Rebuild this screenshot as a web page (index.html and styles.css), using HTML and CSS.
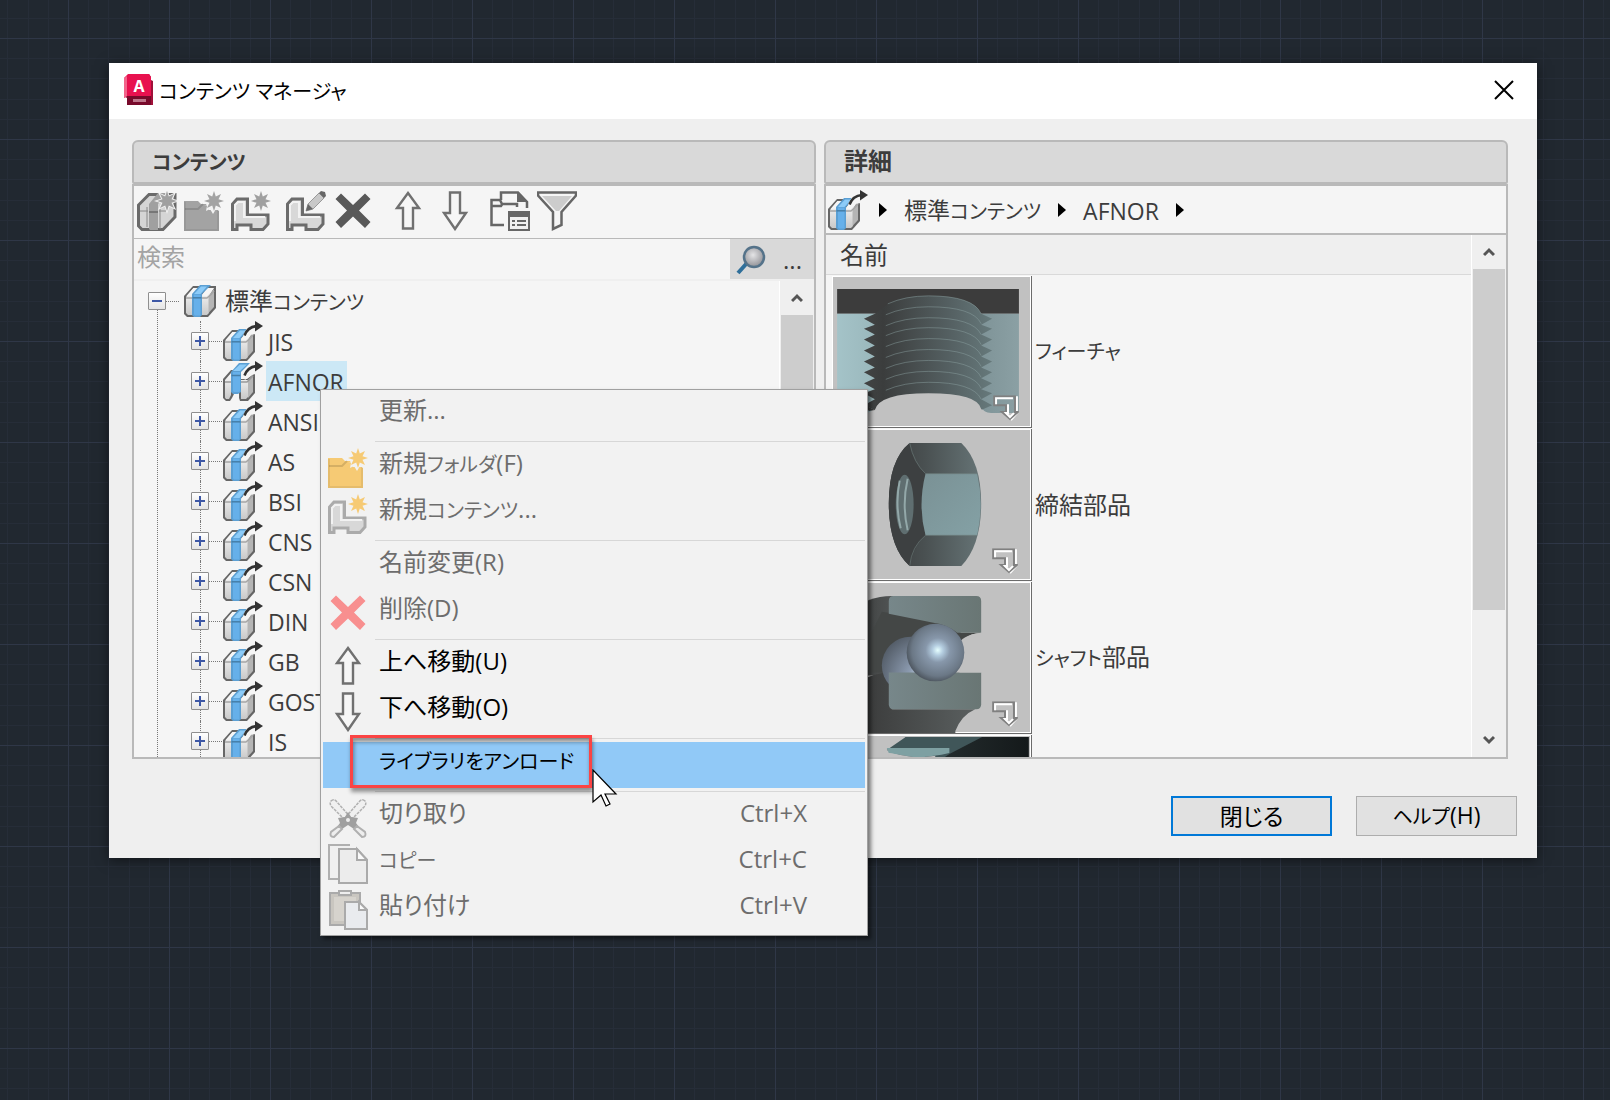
FILE: index.html
```html
<!DOCTYPE html>
<html lang="ja">
<head>
  <meta charset="utf-8">
  <title>コンテンツ マネージャ</title>
  <link rel="stylesheet" href="styles.css">
</head>
<body>
  <!-- shared icons -->
  <svg class="sprite" aria-hidden="true">
    <defs>
      <linearGradient id="gPage" x1="0" y1="0" x2="0" y2="1"><stop offset="0" stop-color="#fafafa"/><stop offset="1" stop-color="#c9c9c9"/></linearGradient>
      <linearGradient id="gSteel" x1="0" y1="0" x2="1" y2="0"><stop offset="0" stop-color="#424444"/><stop offset=".15" stop-color="#3b3d3d"/><stop offset=".7" stop-color="#566264"/><stop offset="1" stop-color="#66797b"/></linearGradient>
      <linearGradient id="gWall" x1="0" y1="0" x2="1" y2="0"><stop offset="0" stop-color="#a4c3c8"/><stop offset=".4" stop-color="#91adb1"/><stop offset=".8" stop-color="#7f9498"/><stop offset="1" stop-color="#8ba0a4"/></linearGradient>
      <linearGradient id="gFace" x1="0" y1="0" x2="1" y2="1"><stop offset="0" stop-color="#7a9195"/><stop offset="1" stop-color="#84a1a5"/></linearGradient>
      <linearGradient id="gNut" x1="0" y1="0" x2="1" y2="0"><stop offset="0" stop-color="#3c3e3f"/><stop offset=".4" stop-color="#4a5152"/><stop offset="1" stop-color="#667476"/></linearGradient>
      <linearGradient id="gRing" x1="0" y1="0" x2="1" y2="0"><stop offset="0" stop-color="#333"/><stop offset="1" stop-color="#5a5f5f"/></linearGradient>
      <linearGradient id="gBlock" x1="0" y1="0" x2="1" y2="0"><stop offset="0" stop-color="#77878a"/><stop offset="1" stop-color="#697674"/></linearGradient>
      <radialGradient id="gBall" cx=".54" cy=".46" r=".56"><stop offset="0" stop-color="#e6ffff"/><stop offset=".16" stop-color="#b4cde0"/><stop offset=".38" stop-color="#8797aa"/><stop offset=".8" stop-color="#6b7886"/><stop offset="1" stop-color="#4c545d"/></radialGradient>
      <radialGradient id="gBall2" cx=".7" cy=".7" r=".8"><stop offset="0" stop-color="#cfe2f3"/><stop offset=".3" stop-color="#8c9bb0"/><stop offset="1" stop-color="#525b66"/></radialGradient>
      <radialGradient id="gLens" cx=".45" cy=".4" r=".6"><stop offset="0" stop-color="#e4e4e6"/><stop offset="1" stop-color="#929297"/></radialGradient>
      <linearGradient id="gDark" x1="0" y1="0" x2="1" y2="0"><stop offset="0" stop-color="#2c3638"/><stop offset="1" stop-color="#14191a"/></linearGradient>
    </defs>

    <symbol id="star" viewBox="0 0 20 20">
      <path d="M10 0l1.800 5.500L17 3l-2.500 5.200L20 10l-5.500 1.800L17 17l-5.200-2.500L10 20l-1.800-5.500L3 17l2.500-5.200L0 10l5.500-1.800L3 3l5.200 2.500z"/>
    </symbol>
    <symbol id="books" viewBox="0 0 32 32">
      <path d="M0 11L9 1h23v22l-8 9H3l-3-3z" fill="#666"/>
      <path d="M2 12L9.500 3H15L8 11v19H4l-2-2z" fill="url(#gPage)"/>
      <path d="M23 3h7L25 11v17l-2 2h-6V11z" fill="url(#gPage)"/>
      <path d="M30 4V22L24.500 28V11.500z" fill="#b5b5b5"/>
      <path d="M2 13h6M18 13h5q4-3 7-7" stroke="#a5a5a5" stroke-width="1.500" fill="none"/>
      <path d="M2.500 11L9.500 3h5L8 10.500zM18 10.500L24 3h5.500L23 11z" fill="#f6f6f6"/>
      <path d="M8 9L16 0h11l-9 9v21l-2 2h-6l-2-2z" fill="#5b9fd3"/>
      <path d="M10 9.500h6.500v21h-5.500l-1-1z" fill="#66b0ea"/>
      <path d="M10 9L17 1.500h6L16.500 9z" fill="#8ccbf8"/>
      <path d="M8.500 12.800h9" stroke="#467fa8" stroke-width="1.500"/>
    </symbol>
    <symbol id="arc" viewBox="0 0 20 16">
      <path d="M1.500 14.500C3.500 9 8 5.500 14 5" stroke="#333" stroke-width="2.600" fill="none"/>
      <path d="M12 0l8 5-8 5.500z" fill="#333"/>
    </symbol>
    <symbol id="lib" viewBox="0 0 40 40">
      <use href="#books" x="0" y="8" width="32" height="32"/>
      <path d="M20 14l4-7h9v6l-6 1-4 4z" fill="#f5f5f5"/>
      <use href="#arc" x="20" y="0" width="20" height="16"/>
    </symbol>
    <symbol id="lib-open" viewBox="0 0 40 40">
      <path d="M0 18l8-9h3v24l-2 4-2 3H3l-3-3zM16 18h8l8-6v20l-7 8h-8l-1-3z" fill="#666"/>
      <path d="M2 19L8 12v22l-2 4H3l-1-1.500zM18 19h7v17l-2 2h-5z" fill="url(#gPage)"/>
      <path d="M25 19l5-5v17l-5 6z" fill="#b5b5b5"/>
      <path d="M2 21h6M18 21h6l6-6" stroke="#999" stroke-width="1.500" fill="none"/>
      <path d="M8 11L16 2h11l-9 9v20l-3 2h-5l-2-2z" fill="#5b9fd3"/>
      <path d="M10 11h7v19l-1 1h-5l-1-1z" fill="#66b0ea"/>
      <path d="M10 10l7-6.500h7L17 10z" fill="#8ccbf8"/>
      <path d="M8.500 14.500h9" stroke="#467fa8" stroke-width="1.500"/>
      <path d="M20 15l4-7h9v5l-6 1-5 5z" fill="#f5f5f5"/>
      <use href="#arc" x="20" y="0" width="20" height="16"/>
    </symbol>
    <symbol id="folder" viewBox="0 0 40 40">
      <path d="M0 10h14l3 3h5l3 6h10v21H0z"/>
      <path d="M1 18h13l5-5" stroke="#0002" fill="none" stroke-width="2"/>
      <path d="M1 11v28h33V19" stroke="#0001" fill="none" stroke-width="2"/>
      <path d="M20 14l3 1-1 5 4-2 3 5 3-5 3 2v-3z" fill="#f2f2f2"/>
      <use href="#star" x="20" y="0" width="20" height="20"/>
    </symbol>
    <symbol id="part" viewBox="0 0 40 40">
      <path d="M1.500 38.500V13l4.500-5h10.500v16H37v9l-5 5.500H20V34H6v4.500z" fill="#d8d8d8" stroke="currentColor" stroke-width="3"/>
      <path d="M4 30V14l3-3h6v15h21" fill="none" stroke="#f2f2f2" stroke-width="2"/>
    </symbol>
    <symbol id="up" viewBox="0 0 40 40">
      <path d="M20 2L31 17h-6v20.500H15V17H9z" fill="#f6f6f6" stroke="#707070" stroke-width="2.400"/>
    </symbol>
    <symbol id="down" viewBox="0 0 40 40">
      <path d="M20 38L31 22h-6V1.500H15V22H9z" fill="#f6f6f6" stroke="#707070" stroke-width="2.400"/>
    </symbol>
    <symbol id="cross" viewBox="0 0 40 40">
      <path d="M8 2.500L20 14 32 2.500 37.500 8 26 19.500 37.500 31 32 37 20 25.500 8 37 2.500 31 14 19.500 2.500 8z"/>
    </symbol>
    <symbol id="turn" viewBox="0 0 26 26">
      <path d="M24 1v16h1l-7 8" fill="none" stroke="#fff" stroke-width="2"/>
      <path d="M1 1h21v16h3l-8 7-8-7h4v-7H1z" fill="none" stroke="#808080" stroke-width="2"/>
      <path d="M3 9V3h17M15 9v9l-2 0 4 4 4-4" fill="none" stroke="#fff" stroke-width="2"/>
    </symbol>
  </svg>

  <main class="dialog">
    <header class="title-bar">
      <svg class="app-icon" viewBox="0 0 32 32" aria-hidden="true">
        <path d="M4 2l4-2h18l2 3v3l2 1v24H4V24l-2-1V4z" fill="#a01039"/>
        <path d="M1 4l4-4h21l2 3v19H4l-3 2z" fill="#e8114f"/>
        <path d="M1 4l3-2v20l-3 2z" fill="#f2648b"/>
        <path d="M4 22h24v9H4z" fill="#780a2b"/>
        <text x="16" y="18" text-anchor="middle" class="app-letter">A</text>
        <path d="M10 25h13v3H10z" fill="#d8a3b3" opacity=".7"/>
      </svg>
      <h1>コンテンツ マネージャ</h1>
      <button class="close" aria-label="閉じる"><svg width="20" height="20" viewBox="0 0 20 20"><path d="M1 1l18 18M19 1L1 19" stroke="#000" stroke-width="2"/></svg></button>
    </header>

    <div class="panels">
      <section class="panel">
        <h2><span class="kana">コンテンツ</span></h2>
        <div class="panel-body">
          <div class="toolbar">
            <button aria-label="新規ライブラリ"><svg class="icon" viewBox="0 0 40 40">
              <path d="M1.500 35V14L12 3.500h26V26L26 38.500H5z" fill="#d5d5d5" stroke="#6a6a6a" stroke-width="3"/>
              <path d="M12 13L21 2h9L21 13v26h-8l-1-1z" fill="#a0a0a0"/>
              <path d="M10 16v20M23 16v22M3 20h8M22 20h7" stroke="#888" fill="none"/>
              <path d="M12 21h9" stroke="#777" stroke-width="2"/>
              <use href="#star" x="17" y="-3" width="26" height="26" fill="#f2f2f2"/>
              <use href="#star" x="20" y="0" width="20" height="20" fill="#a0a0a0"/></svg></button>
            <button aria-label="新規フォルダ"><svg class="icon" fill="#a3a3a3"><use href="#folder"/></svg></button>
            <button aria-label="新規コンテンツ"><svg class="icon part"><use href="#part"/><use href="#star" x="20" width="20" height="20" fill="#a0a0a0"/></svg></button>
            <button class="group" aria-label="編集"><svg class="icon part"><use href="#part"/>
              <path d="M18 19l3-9L31 1l7 7-10 9z" fill="#f5f5f5"/>
              <path d="M20 20l2-7L33 2l5 5-11 11z" fill="#c8c8c8" stroke="#999"/>
              <path d="M20 20l2-7 5 5zM33 2l2-2 4 1 1 4-2 2z" fill="#666"/></svg></button>
            <button aria-label="削除"><svg class="icon" fill="#595959"><use href="#cross"/></svg></button>
            <button class="group" aria-label="上へ移動"><svg class="icon"><use href="#up"/></svg></button>
            <button aria-label="下へ移動"><svg class="icon"><use href="#down"/></svg></button>
            <button class="group" aria-label="プロパティ"><svg class="icon" viewBox="0 0 40 40">
              <path d="M14 34H1.500V9H10l2 4h15v3M2 15h9l2-3M11 9V1.500h17L37 11v6" fill="none" stroke="#666" stroke-width="2.500"/>
              <path d="M27 1l11 10H27z" fill="#666"/>
              <path d="M18 20h22v20H18z" fill="#666"/><path d="M20 26h18v12H20z" fill="#f0f0f0"/>
              <path d="M22 30h3m2 0h9M22 34h3m2 0h9" stroke="#666" stroke-width="2"/></svg></button>
            <button aria-label="フィルタ"><svg class="icon" viewBox="0 0 40 40">
              <path d="M1 1.500h38v3L24.500 21v13L16 38V21L1 4.500z" fill="#f5f5f5" stroke="#666" stroke-width="2.500"/>
              <path d="M5 5h30L22 20h-3z" fill="#ccc"/></svg></button>
          </div>
          <div class="search">
            <input type="text" placeholder="検索" aria-label="検索">
            <button class="find" aria-label="検索"><svg width="30" height="30" viewBox="0 0 30 30">
              <path d="M2 28l9-10" stroke="#2f6f9a" stroke-width="4"/>
              <circle cx="18" cy="12" r="10" fill="url(#gLens)" stroke="#55738a" stroke-width="2.500"/></svg></button>
            <button class="more" aria-label="オプション">...</button>
          </div>
          <div class="tree-view">
            <ul class="tree">
              <li class="root"><button class="toggle open" aria-label="閉じる"></button><svg class="root-icon"><use href="#books"/></svg><span class="label">標準<span class="kana">コンテンツ</span></span></li>
              <li><button class="toggle" aria-label="開く"></button><svg class="icon"><use href="#lib"/></svg><span class="label">JIS</span></li>
              <li><button class="toggle" aria-label="開く"></button><svg class="icon"><use href="#lib-open"/></svg><span class="label selected">AFNOR</span></li>
              <li><button class="toggle" aria-label="開く"></button><svg class="icon"><use href="#lib"/></svg><span class="label">ANSI</span></li>
              <li><button class="toggle" aria-label="開く"></button><svg class="icon"><use href="#lib"/></svg><span class="label">AS</span></li>
              <li><button class="toggle" aria-label="開く"></button><svg class="icon"><use href="#lib"/></svg><span class="label">BSI</span></li>
              <li><button class="toggle" aria-label="開く"></button><svg class="icon"><use href="#lib"/></svg><span class="label">CNS</span></li>
              <li><button class="toggle" aria-label="開く"></button><svg class="icon"><use href="#lib"/></svg><span class="label">CSN</span></li>
              <li><button class="toggle" aria-label="開く"></button><svg class="icon"><use href="#lib"/></svg><span class="label">DIN</span></li>
              <li><button class="toggle" aria-label="開く"></button><svg class="icon"><use href="#lib"/></svg><span class="label">GB</span></li>
              <li><button class="toggle" aria-label="開く"></button><svg class="icon"><use href="#lib"/></svg><span class="label">GOST</span></li>
              <li><button class="toggle" aria-label="開く"></button><svg class="icon"><use href="#lib"/></svg><span class="label">IS</span></li>
            </ul>
            <div class="scrollbar">
              <svg class="chevron" viewBox="0 0 12 10"><path d="M1 8l5-5 5 5" fill="none" stroke="#555" stroke-width="3"/></svg>
              <div class="thumb"></div>
              <svg class="chevron" viewBox="0 0 12 10"><path d="M1 2l5 5 5-5" fill="none" stroke="#555" stroke-width="3"/></svg>
            </div>
          </div>
        </div>
      </section>

      <section class="panel">
        <h2>詳細</h2>
        <div class="panel-body">
          <nav class="crumbs">
            <svg class="icon"><use href="#lib"/></svg>
            <i class="caret"></i><a href="#">標準<span class="kana">コンテンツ</span></a>
            <i class="caret"></i><a href="#">AFNOR</a>
            <i class="caret"></i>
          </nav>
          <div class="details">
            <table>
              <thead><tr><th>名前</th></tr></thead>
              <tbody>
                <tr><td><div class="item">
                  <svg class="preview" viewBox="0 0 200 152">
                    <path d="M5 13h183v25H5z" fill="#3c3c3c"/>
                    <path d="M5 38h183v100h-28q-8-1-10-6H43q-3 5-10 6H5z" fill="url(#gWall)"/>
                    <path d="M43 38l-11 5 11 6-11 4 11 6-11 5 11 6-11 5 11 6-11 5 11 6-11 5 11 6-11 5 11 6-11 4 11 6-11 6 11 5h107l11-5-11-6 11-6-11-4 11-6-11-5 11-6-11-5 11-6-11-5 11-6-11-5 11-6-11-5 11-6-11-4 11-6-11-5Q142 20 97 20 66 20 54 30z" fill="url(#gSteel)"/>
                    <g fill="none" stroke="#8fa5a5" stroke-opacity=".45">
                      <path d="M56 28q18-8 41-8 45 0 53 18"/>
                      <path d="M54 39q18-8 43-8 45 0 53 17"/><path d="M54 50q18-8 43-8 45 0 53 17"/>
                      <path d="M54 60q18-8 43-8 45 0 53 17"/><path d="M54 71q18-8 43-8 45 0 53 17"/>
                      <path d="M54 82q18-8 43-8 45 0 53 17"/><path d="M54 93q18-8 43-8 45 0 53 17"/>
                      <path d="M54 104q18-8 43-8 45 0 53 17"/><path d="M54 115q18-8 43-8 45 0 53 17"/>
                    </g>
                    <path d="M43 135q4-17 54-17 50 0 53 16 3 4 9 5H33q7 0 10-4z" fill="#c1c1c1"/>
                    <path d="M33 130l10 5-6 1z" fill="#3c3c3c"/>
                    <use href="#turn" x="162" y="120" width="26" height="26"/>
                  </svg><span class="kana">フィーチャ</span></div></td></tr>
                <tr><td><div class="item">
                  <svg class="preview" viewBox="0 0 200 152">
                    <path d="M78 14h52q20 19 20 61t-20 63H78Q57 119 57 75T78 14z" fill="url(#gNut)"/>
                    <path d="M78 14q4 20 16 31-8 30 0 62-12 10-16 31Q57 119 57 75T78 14z" fill="#3d4041"/>
                    <path d="M94 45h52q7 30 0 62H94q-8-30 0-62z" fill="url(#gFace)"/>
                    <path d="M78 14q4 20 16 31h52M94 107h52M78 138q2-20 16-31" fill="none" stroke="#70807f" stroke-opacity=".6"/>
                    <ellipse cx="73" cy="76" rx="9" ry="30" fill="#5f6e70"/>
                    <path d="M68 52q-5 24 1 48M76 50q-6 26 0 52" fill="none" stroke="#93a8a9" stroke-width="2"/>
                    <use href="#turn" x="161" y="120" width="26" height="26"/>
                  </svg><span>締結部品</span></div></td></tr>
                <tr><td><div class="item">
                  <svg class="preview" viewBox="0 0 200 152">
                    <path d="M3 75Q10 14 60 14h20v80H3z" fill="url(#gRing)"/>
                    <path d="M50 30l60 10 20 11h20q-20 2-24 14l-60 26H20z" fill="#444746"/>
                    <path d="M3 152V135q15-44 57-44v37h84q-14 6-20 22v2z" fill="url(#gRing)"/>
                    <circle cx="79" cy="84" r="29" fill="url(#gBall2)"/>
                    <path d="M57 32V19q0-5 5-5h83q5 0 5 5v32h-24q-10-8-24-10z" fill="url(#gBlock)"/>
                    <path d="M57 91h93v32q0 5-5 5H62q-5 0-5-5z" fill="url(#gBlock)"/>
                    <path d="M128 91q5-8 5-18l-5-12 6-4q4-5 16-6v40z" fill="#c1c1c1"/>
                    <circle cx="104" cy="71" r="29" fill="url(#gBall)"/>
                    <use href="#turn" x="161" y="120" width="26" height="26"/>
                  </svg><span><span class="kana">シャフト</span>部品</span></div></td></tr>
                <tr><td><div class="item">
                  <svg class="preview" viewBox="0 0 200 152">
                    <path d="M74 2h124v150H60z" fill="url(#gDark)"/>
                    <path d="M74 2h77l-33 17-20 14-43-18z" fill="#405659"/>
                    <path d="M55 13h63v5l-8 2-24 3-29-5z" fill="#7ea0a2"/>
                    <path d="M57 18l29 5 18-2-14 40H57z" fill="#c1c1c1"/>
                  </svg></div></td></tr>
              </tbody>
            </table>
            <div class="scrollbar">
              <svg class="chevron" viewBox="0 0 12 10"><path d="M1 8l5-5 5 5" fill="none" stroke="#555" stroke-width="3"/></svg>
              <div class="thumb short"></div>
              <svg class="chevron" viewBox="0 0 12 10"><path d="M1 2l5 5 5-5" fill="none" stroke="#555" stroke-width="3"/></svg>
            </div>
          </div>
        </div>
      </section>
    </div>

    <footer class="actions">
      <button class="default">閉じる</button>
      <button><span class="kana">ヘルプ</span>(H)</button>
    </footer>

    <!-- right click menu on the selected library -->
    <div class="menu">
      <button disabled><span class="text">更新...</span></button>
      <hr>
      <button disabled><svg class="icon" fill="#f6ca74"><use href="#folder"/></svg><span class="text">新規<span class="kana">フォルダ</span>(F)</span></button>
      <button disabled><svg class="icon part-dim"><use href="#part"/><use href="#star" x="20" width="20" height="20" fill="#f6ca74"/></svg><span class="text">新規<span class="kana">コンテンツ</span>...</span></button>
      <hr>
      <button disabled><span class="text">名前変更(R)</span></button>
      <button disabled><svg class="icon" fill="#f88f8f"><use href="#cross"/></svg><span class="text">削除(D)</span></button>
      <hr>
      <button><svg class="icon"><use href="#up"/></svg><span class="text">上へ移動(U)</span></button>
      <button><svg class="icon"><use href="#down"/></svg><span class="text">下へ移動(O)</span></button>
      <hr>
      <button class="active"><span class="text"><span class="kana">ライブラリをアンロード</span></span></button>
      <hr>
      <button disabled><svg class="icon" viewBox="0 0 40 40">
        <path d="M3 3q3-3 6 1l15 17-4 4L4 9Q1 6 3 3zM37 3q-3-3-6 1L16 21l4 4L36 9q3-3 1-6z" fill="#f0f0f0" stroke="#b0b0b0" stroke-width="1.500" stroke-dasharray="3 1"/>
        <path d="M20 14l3 5 7 1-2 5 3 4-5 2-6-4-6 4-5-2 3-4-2-5 7-1z" fill="#a0a0a0"/>
        <path d="M11 28l-8 6q-2 5 3 5l8-8zM29 28l8 6q2 5-3 5l-8-8z" fill="#eee" stroke="#b0b0b0" stroke-width="2"/>
        <circle cx="20" cy="22" r="2" fill="#eee"/></svg><span class="text">切り取り</span><kbd>Ctrl+X</kbd></button>
      <button disabled><svg class="icon" viewBox="0 0 40 40">
        <path d="M22 1H1v34h10" fill="#f0f0f0" stroke="#b0b0b0" stroke-width="2"/>
        <path d="M11 5h18l10 11v23H11z" fill="#ececec" stroke="#aaa" stroke-width="2"/>
        <path d="M29 5v11h10z" fill="#fafafa" stroke="#aaa" stroke-width="2"/></svg><span class="text"><span class="kana">コピー</span></span><kbd>Ctrl+C</kbd></button>
      <button disabled><svg class="icon" viewBox="0 0 40 40">
        <path d="M2 3h30v32H2z" fill="#c9c6c0" stroke="#aaa" stroke-width="2"/>
        <path d="M6 7h22v24H6z" fill="#d6d3cd"/>
        <path d="M11 1h12v4H11z" fill="#eee" stroke="#aaa" stroke-width="2"/>
        <path d="M17 12h14l8 8v19H17z" fill="#e9ebee" stroke="#aaa" stroke-width="2"/>
        <path d="M31 12v8h8z" fill="#fafafa" stroke="#aaa" stroke-width="2"/></svg><span class="text">貼り付け</span><kbd>Ctrl+V</kbd></button>
      <div class="callout"></div>
      <svg class="cursor" width="26" height="40" viewBox="0 0 26 40"><path d="M1 1v32l8-7 5 11 4-2-5-10h11z" fill="#fff" stroke="#000" stroke-width="1.200"/></svg>
    </div>
  </main>
</body>
</html>
```
FILE: styles.css
```css
* {
  box-sizing: border-box;
}
body {
  margin: 0;
  min-height: 100vh;
  padding: 63px 73px 63px 109px;
  background-color: #212830;
  background-image:
    linear-gradient(90deg, #2f3747 1px, transparent 1px),
    linear-gradient(#2f3747 1px, transparent 1px),
    linear-gradient(90deg, transparent 20px, #262d38 20px, #262d38 21px, transparent 21px, transparent 40px, #262d38 40px, #262d38 41px, transparent 41px, transparent 61px, #262d38 61px, #262d38 62px, transparent 62px, transparent 81px, #262d38 81px, #262d38 82px, transparent 82px),
    linear-gradient(transparent 20px, #262d38 20px, #262d38 21px, transparent 21px, transparent 40px, #262d38 40px, #262d38 41px, transparent 41px, transparent 61px, #262d38 61px, #262d38 62px, transparent 62px, transparent 81px, #262d38 81px, #262d38 82px, transparent 82px);
  background-size: 101px 101px;
  background-position: 68px 38px;
  color: #3c3c3c;
  font-family: "Open Sans", "Noto Sans CJK JP", sans-serif;
  font-size: 24px;
  font-feature-settings: "palt";
}
button, input {
  font: inherit;
  font-feature-settings: inherit;
  color: inherit;
  margin: 0;
  padding: 0;
  border: 0;
  background: none;
}
.sprite {
  position: absolute;
  width: 0;
  height: 0;
}
.kana {
  font-size: 20px;
}
.icon {
  display: block;
  flex: none;
  width: 40px;
  height: 40px;
}
.part {
  color: #6b6b6b;
}
.part-dim {
  color: #ababab;
}

/* window */
.dialog {
  position: relative;
  background: #efefef;
  box-shadow: 0 2px 12px rgba(0,0,0,0.5);
}
.title-bar {
  display: flex;
  align-items: center;
  height: 56px;
  padding: 0 23px 2px 14px;
  background: #fff;
}
.app-icon {
  width: 32px;
  height: 32px;
  margin-right: 4px;
}
.app-letter {
  fill: #fff;
  font: bold 16px "Open Sans", sans-serif;
}
h1 {
  flex: 1;
  margin: 0;
  color: #000;
  font-size: 20px;
  font-weight: 400;
}
.close {
  display: flex;
}
.panels {
  display: grid;
  grid-template-columns: 1fr 1fr;
  gap: 8px;
  padding: 21px 29px 0 23px;
}
.panel {
  min-width: 0;
}
h2 {
  height: 44px;
  margin: 0;
  padding-left: 18px;
  border: 2px solid #b9b9b9;
  border-radius: 6px 6px 2px 2px;
  background: #d9d9d9;
  font-size: 24px;
  font-weight: 600;
  line-height: 37px;
}
.panel-body {
  display: flex;
  flex-direction: column;
  height: 575px;
  border: 2px solid #b9b9b9;
  background: #f5f5f5;
}

/* contents */
.toolbar {
  display: flex;
  align-items: center;
  gap: 7px;
  height: 53px;
  padding: 0 0 2px 3px;
  border-bottom: 1px solid #b9b9b9;
}
.group {
  margin-left: 8px;
}
.search {
  display: flex;
  height: 42px;
  border-bottom: 2px solid #efefef;
}
.search input {
  flex: 1;
  min-width: 0;
  padding: 0 3px 5px;
}
.search input::placeholder {
  color: #a3a3a3;
  opacity: 1;
}
.search button {
  background: #d9d9d9;
}
.find {
  width: 41px;
  padding-top: 6px;
}
.more {
  width: 43px;
}
.tree-view {
  display: flex;
  flex: 1;
  min-height: 0;
}
.tree {
  position: relative;
  flex: 1;
  margin: 0;
  padding: 0 0 0 57px;
  overflow: hidden;
  list-style: none;
  font-size: 23px;
}
.tree li {
  position: relative;
  display: flex;
  align-items: center;
  height: 40px;
}
.tree .root {
  margin-left: -43px;
  font-size: 24px;
}
.tree::before {
  content: "";
  position: absolute;
  top: 20px;
  bottom: 0;
  left: 23px;
  border-left: 1px dotted #777;
}
.tree li:not(.root)::before {
  content: "";
  position: absolute;
  top: 0;
  bottom: 0;
  left: 9px;
  border-left: 1px dotted #777;
}
.toggle {
  position: relative;
  width: 18px;
  height: 18px;
  margin-right: 14px;
  border: 1px solid #8f8f8f;
  border-radius: 1px;
  background: linear-gradient(90deg, #3d57a5, #3d57a5) center / 10px 2px no-repeat, linear-gradient(#3d57a5, #3d57a5) center / 2px 10px no-repeat, linear-gradient(#fff, #e4e4e4);
}
.open {
  margin-right: 18px;
  background: linear-gradient(#3d57a5, #3d57a5) center / 10px 2px no-repeat, linear-gradient(#fff, #e4e4e4);
}
.toggle::after {
  content: "";
  position: absolute;
  top: 8px;
  left: 17px;
  width: 13px;
  border-top: 1px dotted #777;
}
.root-icon {
  width: 32px;
  height: 32px;
  margin-right: 7px;
}
.label {
  height: 40px;
  padding: 0 3px 0 2px;
  line-height: 42px;
}
.root .label {
  line-height: 40px;
}
.tree li:not(.root) .label {
  margin-left: 3px;
}
.tree .selected {
  background: #cce8f6;
}
.scrollbar {
  display: flex;
  flex: none;
  flex-direction: column;
  align-items: center;
  width: 35px;
  padding-right: 1px;
  border-left: 1px solid #fff;
  background: #efefef;
}
.chevron {
  flex: none;
  width: 12px;
  height: 34px;
}
.thumb {
  flex: 1;
  width: 32px;
  background: #cdcdcd;
}
.short {
  flex: none;
  height: 341px;
  margin-bottom: auto;
}

/* details */
.crumbs {
  display: flex;
  flex: none;
  align-items: center;
  height: 49px;
  padding-left: 2px;
  border-bottom: 2px solid #b9b9b9;
  font-size: 23px;
}
.crumbs .icon {
  margin-right: -6px;
}
.crumbs a {
  color: inherit;
  line-height: 40px;
  padding-top: 2px;
  text-decoration: none;
}
.caret {
  margin: 0 17px;
  border: 7px solid transparent;
  border-right: 0;
  border-left: 8px solid #000;
}
.details {
  display: flex;
  flex: 1;
  min-height: 0;
  overflow: hidden;
}
table {
  flex: 1;
  border-spacing: 0;
  align-self: flex-start;
}
th {
  height: 40px;
  padding: 0 14px;
  border-bottom: 1px solid #d9d9d9;
  background: #efefef;
  font-weight: 400;
  text-align: left;
  line-height: 39px;
}
td {
  padding: 0 0 0 6px;
}
.item {
  display: flex;
  align-items: center;
  gap: 3px;
  height: 153px;
}
.item > span {
  line-height: 32px;
}
.preview {
  flex: none;
  width: 200px;
  height: 152px;
  border-right: 1px solid #6b6b6b;
  border-bottom: 1px solid #6b6b6b;
  background: #c1c1c1;
  box-shadow: inset 1px 1px #fff, inset -1px -1px #fff;
}

.actions {
  display: flex;
  justify-content: flex-end;
  gap: 24px;
  padding: 37px 20px 22px;
}
.actions button {
  width: 161px;
  height: 40px;
  border: 1px solid #adadad;
  background: #e1e1e1;
  color: #000;
  font-size: 23px;
  line-height: 36px;
}
.actions .default {
  border: 2px solid #0078d7;
}

/* context menu */
.menu {
  position: absolute;
  top: 326px;
  left: 211px;
  width: 548px;
  padding: 2px;
  border: 1px solid #a0a0a0;
  background: #f2f2f2;
  box-shadow: 3px 3px 4px rgba(0,0,0,0.5);
}
.menu button {
  position: relative;
  display: flex;
  width: 100%;
  height: 46px;
  padding: 3px 58px 0 56px;
  color: #000;
  text-align: left;
}
.menu button:disabled {
  color: #6d6d6d;
}
.menu .icon {
  margin-left: -51px;
  margin-right: 11px;
}
.text {
  flex: 1;
  line-height: 30px;
}
.menu kbd {
  font: inherit;
  line-height: 30px;
}
.menu hr {
  height: 1px;
  margin: 3px 0 3px 52px;
  border: 0;
  background: #d7d7d7;
}
.menu .active {
  background: #91c9f7;
}
.callout {
  position: absolute;
  top: 345px;
  left: 29px;
  width: 242px;
  height: 53px;
  border: 3px solid #fb4444;
  box-shadow: 1px 4px 4px rgba(0,0,0,0.4), inset 1px 4px 4px rgba(0,0,0,0.4);
}
.cursor {
  position: absolute;
  top: 379px;
  left: 271px;
}
```
